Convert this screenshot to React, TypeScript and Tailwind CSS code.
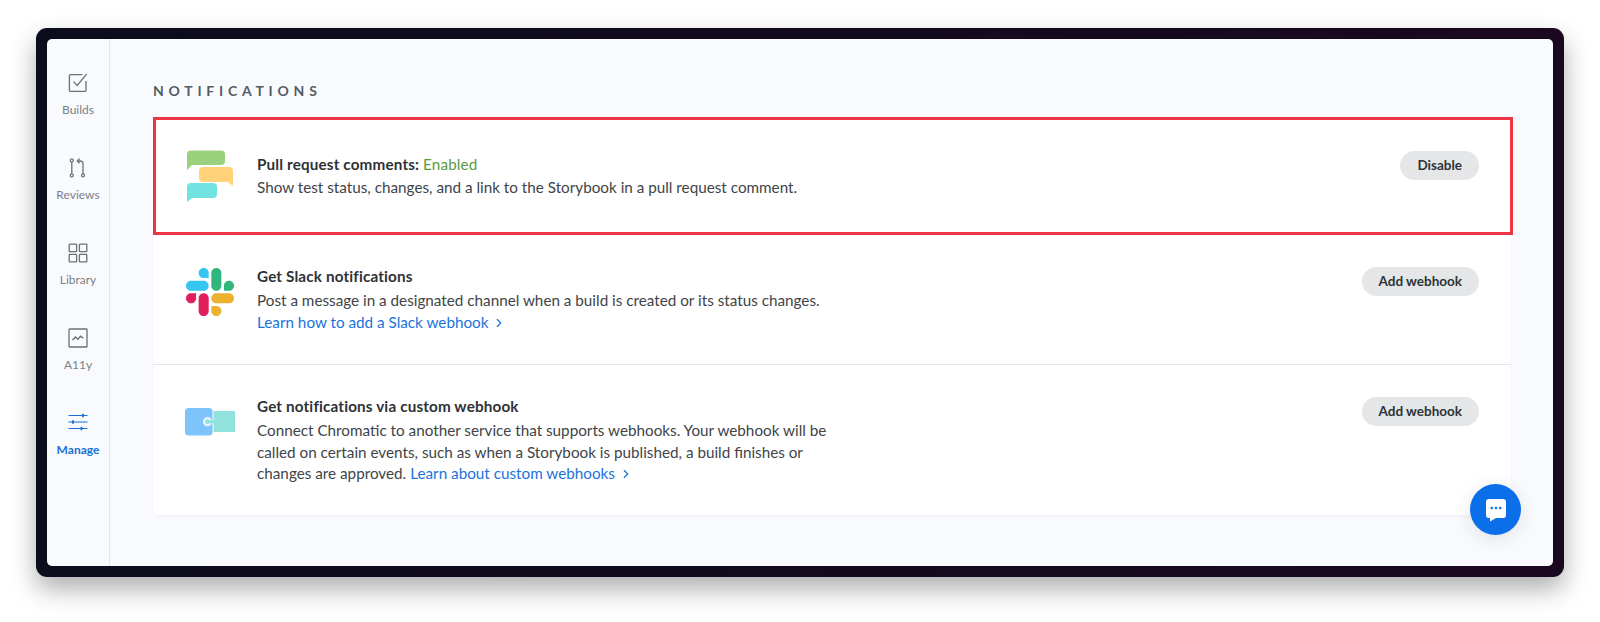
import React from 'react';
import { ChevronRight } from 'lucide-react';

const FONT = 'font-["Lato","Noto_Sans",sans-serif]';

function BuildsIcon() {
  return (
    <svg width="20" height="20" viewBox="0 0 20 20" fill="none" stroke="currentColor" strokeWidth="1.3">
      <path d="M14.5 1.7H2.2a.8.8 0 0 0-.8.8v15a.8.8 0 0 0 .8.8h15a.8.8 0 0 0 .8-.8V8" />
      <path d="M5.6 8.6l3.6 3.9L18.6 1.2" />
    </svg>
  );
}

function ReviewsIcon() {
  return (
    <svg width="20" height="20" viewBox="0 0 20 20" fill="none" stroke="currentColor" strokeWidth="1.3">
      <circle cx="3.8" cy="2.4" r="1.5" />
      <circle cx="3.8" cy="17.4" r="1.5" />
      <circle cx="15" cy="17.4" r="1.5" />
      <path d="M3.8 4v11.8M15 15.8V6a3 3 0 0 0-3-3H9.6" />
      <path d="M11.6 0.6L9.2 3l2.4 2.4" />
    </svg>
  );
}

function LibraryIcon() {
  return (
    <svg width="20" height="20" viewBox="0 0 20 20" fill="none" stroke="currentColor" strokeWidth="1.3">
      <rect x="1.2" y="1.2" width="7.4" height="7.4" rx="0.6" />
      <rect x="11.4" y="1.2" width="7.4" height="7.4" rx="0.6" />
      <rect x="1.2" y="11.4" width="7.4" height="7.4" rx="0.6" />
      <rect x="11.4" y="11.4" width="7.4" height="7.4" rx="0.6" />
    </svg>
  );
}

function A11yIcon() {
  return (
    <svg width="20" height="20" viewBox="0 0 20 20" fill="none" stroke="currentColor" strokeWidth="1.3">
      <rect x="1" y="1" width="18" height="18" rx="0.6" />
      <path d="M4.5 12l3-3 2.5 2.2 2.5-3 3 2" />
    </svg>
  );
}

function ManageIcon() {
  return (
    <svg width="20" height="20" viewBox="0 0 20 20" fill="none" stroke="currentColor" strokeWidth="1.2" className="-mt-[1px] mb-[1px]">
      <path d="M0.5 3.500h19M0.5 10h19M0.5 16.500h19" />
      <path d="M15 1.800v3.400M5 8.300v3.400M13.500 14.800v3.400" strokeWidth="1.800" />
    </svg>
  );
}

function BubblesIcon() {
  return (
    <svg width="48" height="52" viewBox="0 0 48 52">
      <path d="M1 4.5a4 4 0 0 1 4-4h30a4 4 0 0 1 4 4v6.500a4 4 0 0 1-4 4H6L1 20z" fill="#9bd17c" />
      <path d="M13 21a4 4 0 0 1 4-4h26a4 4 0 0 1 4 4v15l-5-4H17a4 4 0 0 1-4-4z" fill="#ffd27a" />
      <path d="M1 37a4 4 0 0 1 4-4h22a4 4 0 0 1 4 4v7a4 4 0 0 1-4 4H6l-5 4z" fill="#70e3e0" />
    </svg>
  );
}

function SlackIcon() {
  return (
    <svg width="48" height="48" viewBox="0 0 122.800 122.800">
      <path d="M25.800 77.600c0 7.100-5.800 12.900-12.900 12.900S0 84.700 0 77.600s5.800-12.900 12.900-12.900h12.900v12.900z" fill="#e01e5a" />
      <path d="M32.300 77.600c0-7.100 5.800-12.900 12.900-12.900s12.900 5.800 12.900 12.900v32.300c0 7.100-5.800 12.900-12.900 12.900s-12.900-5.800-12.900-12.900V77.600z" fill="#e01e5a" />
      <path d="M45.200 25.800c-7.100 0-12.900-5.800-12.900-12.900S38.100 0 45.200 0s12.900 5.800 12.900 12.900v12.900H45.200z" fill="#36c5f0" />
      <path d="M45.200 32.300c7.100 0 12.900 5.800 12.900 12.900s-5.800 12.900-12.900 12.900H12.900C5.800 58.100 0 52.300 0 45.200s5.800-12.900 12.900-12.900h32.300z" fill="#36c5f0" />
      <path d="M97 45.200c0-7.100 5.800-12.900 12.900-12.900s12.900 5.800 12.900 12.900-5.800 12.900-12.900 12.900H97V45.200z" fill="#2eb67d" />
      <path d="M90.500 45.200c0 7.100-5.800 12.900-12.900 12.900s-12.900-5.800-12.900-12.900V12.900C64.700 5.800 70.500 0 77.600 0s12.900 5.800 12.900 12.900v32.300z" fill="#2eb67d" />
      <path d="M77.600 97c7.100 0 12.900 5.800 12.900 12.900s-5.800 12.900-12.900 12.900-12.900-5.800-12.900-12.900V97h12.900z" fill="#ecb22e" />
      <path d="M77.600 90.500c-7.100 0-12.900-5.800-12.900-12.900s5.800-12.900 12.900-12.900h32.300c7.100 0 12.900 5.800 12.900 12.900s-5.800 12.900-12.900 12.900H77.600z" fill="#ecb22e" />
    </svg>
  );
}

function PuzzleIcon() {
  return (
    <svg width="50" height="48" viewBox="0 0 50 48">
      <rect x="28.500" y="13" width="21.500" height="21" fill="#8fe3dc" />
      <rect x="0" y="10" width="27.500" height="27.500" rx="3.500" fill="#7cc4fb" />
      <circle cx="22.500" cy="23.700" r="3.500" fill="#8fe3dc" stroke="#e8f6ff" strokeWidth="2.200" />
      <path d="M24 23.700h6" stroke="#8fe3dc" strokeWidth="3" />
    </svg>
  );
}

function ChatIcon() {
  return (
    <svg width="20" height="23" viewBox="0 0 20 23">
      <path d="M3 0h14a3 3 0 0 1 3 3v13a3 3 0 0 1-3 3h-7l-6 3.500V19H3a3 3 0 0 1-3-3V3a3 3 0 0 1 3-3z" fill="#fff" />
      <circle cx="5.800" cy="9" r="1.300" fill="#0a6fe8" />
      <circle cx="10" cy="9" r="1.300" fill="#0a6fe8" />
      <circle cx="14.200" cy="9" r="1.300" fill="#0a6fe8" />
    </svg>
  );
}

const NAV_ITEMS = [
  { label: 'Builds', icon: <BuildsIcon /> },
  { label: 'Reviews', icon: <ReviewsIcon /> },
  { label: 'Library', icon: <LibraryIcon /> },
  { label: 'A11y', icon: <A11yIcon /> },
];

function NavItem({ label, icon, active }: { label: string; icon: React.ReactNode; active?: boolean }) {
  return (
    <div className={`flex flex-col items-center gap-[7px] ${active ? 'text-[#1b6fd6]' : 'text-[#6b7177]'}`}>
      {icon}
      <span className={`text-[12px] leading-[20px] ${active ? 'font-bold' : 'font-normal text-[#7b8086]'}`}>{label}</span>
    </div>
  );
}

function PillButton({ children }: { children: React.ReactNode }) {
  return (
    <button className="h-[29px] rounded-full bg-[#e4e6e8] px-[17px] text-[13.500px] font-bold text-[#2e3338]">
      {children}
    </button>
  );
}

function Learn({ children }: { children: React.ReactNode }) {
  return (
    <span className="text-[#1b72dd]">
      {children}
      <ChevronRight size={14} strokeWidth={2} className="ml-[4px] inline align-[-2px]" />
    </span>
  );
}

export default function App() {
  return (
    <div className={`h-screen bg-white pt-[28px] pr-[36px] pb-[45px] pl-[36px] ${FONT}`}>
      <div className="h-full rounded-[11px] bg-linear-to-r from-[#0b0c1c] to-[#1a0820] p-[11px] shadow-[0_12px_26px_rgba(0,0,0,0.32)]">
        <div className="relative flex h-full rounded-[5px] bg-[#f8fafe]">
          <nav className="flex w-[63px] shrink-0 flex-col gap-[38px] border-r border-[#e2e6ec] pt-[34px]">
            {NAV_ITEMS.map((item) => (
              <NavItem key={item.label} label={item.label} icon={item.icon} />
            ))}
            <NavItem label="Manage" icon={<ManageIcon />} active />
          </nav>

          <main className="min-w-0 flex-1 pt-[43px] pr-[42px] pl-[43px]">
            <h2 className="mb-[18px] text-[14px] leading-[17px] font-bold tracking-[0.34em] text-[#555c63]">NOTIFICATIONS</h2>

            <div className="rounded-[5px] bg-white text-[15.250px] leading-[21.500px] text-[#404448] shadow-[0_1px_3px_rgba(0,0,0,0.04)]">
              {/* highlighted row */}
              <div className="-mr-[2px] flex h-[118px] items-start border-[3px] border-[#ee3446] pt-[30px] pr-[31px] pl-[30px]">
                <div className="w-[48px] shrink-0"><BubblesIcon /></div>
                <div className="ml-[23px] flex-1 pt-[4px]">
                  <div className="mb-[1.500px] font-bold tracking-[0.15px] text-[#2e3236]">
                    Pull request comments: <span className="font-normal text-[#5a9a3c]">Enabled</span>
                  </div>
                  <div>Show test status, changes, and a link to the Storybook in a pull request comment.</div>
                </div>
                <div className="pt-[1px]"><PillButton>Disable</PillButton></div>
              </div>

              <div className="flex h-[130px] items-start border-b border-[#e3e5e8] pt-[31px] pr-[32px] pl-[33px]">
                <div className="w-[48px] shrink-0 pt-[2px]"><SlackIcon /></div>
                <div className="ml-[23px] flex-1">
                  <div className="mb-[2.500px] font-bold tracking-[0.15px] text-[#2e3236]">Get Slack notifications</div>
                  <div>Post a message in a designated channel when a build is created or its status changes.</div>
                  <Learn>Learn how to add a Slack webhook</Learn>
                </div>
                <div className="pt-[1px]"><PillButton>Add webhook</PillButton></div>
              </div>

              <div className="flex h-[150px] items-start pt-[31px] pr-[32px] pl-[32px]">
                <div className="w-[49px] shrink-0 pt-[2px]"><PuzzleIcon /></div>
                <div className="ml-[23px] flex-1">
                  <div className="mb-[2.500px] font-bold tracking-[0.15px] text-[#2e3236]">Get notifications via custom webhook</div>
                  <div>Connect Chromatic to another service that supports webhooks. Your webhook will be</div>
                  <div>called on certain events, such as when a Storybook is published, a build finishes or</div>
                  <div className="flex gap-[4px]">
                    <span>changes are approved.</span>
                    <Learn>Learn about custom webhooks</Learn>
                  </div>
                </div>
                <div className="pt-[1px]"><PillButton>Add webhook</PillButton></div>
              </div>
            </div>
          </main>

          <button className="absolute right-[32px] bottom-[31px] flex h-[51px] w-[51px] items-center justify-center rounded-full bg-[#0a6fe8] pt-[2px] shadow-[0_4px_20px_rgba(0,0,0,0.1)]">
            <ChatIcon />
          </button>
        </div>
      </div>
    </div>
  );
}
